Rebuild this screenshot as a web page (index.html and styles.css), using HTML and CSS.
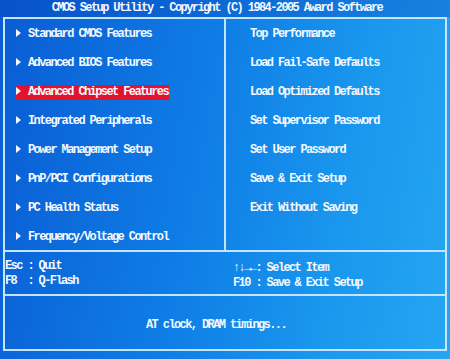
FILE: index.html
```html
<!DOCTYPE html>
<html lang="en">
<head>
    <meta charset="UTF-8">
    <meta name="viewport" content="width=device-width, initial-scale=1.0">
    <link rel="stylesheet" href="styles.css">
</head>
<body>
    <div class="title">CMOS Setup Utility - Copyright (C) 1984-2005 Award Software</div>

    <div class="screen">
        <div class="main">
            <ul class="menu menu-left">
                <li class="item"><span class="label"><span class="arrow"></span>Standard CMOS Features</span></li>
                <li class="item"><span class="label"><span class="arrow"></span>Advanced BIOS Features</span></li>
                <li class="item"><span class="label selected"><span class="arrow"></span>Advanced Chipset Features</span></li>
                <li class="item"><span class="label"><span class="arrow"></span>Integrated Peripherals</span></li>
                <li class="item"><span class="label"><span class="arrow"></span>Power Management Setup</span></li>
                <li class="item"><span class="label"><span class="arrow"></span>PnP/PCI Configurations</span></li>
                <li class="item"><span class="label"><span class="arrow"></span>PC Health Status</span></li>
                <li class="item"><span class="label"><span class="arrow"></span>Frequency/Voltage Control</span></li>
            </ul>
            <ul class="menu menu-right">
                <li class="item">Top Performance</li>
                <li class="item">Load Fail-Safe Defaults</li>
                <li class="item">Load Optimized Defaults</li>
                <li class="item">Set Supervisor Password</li>
                <li class="item">Set User Password</li>
                <li class="item">Save &amp; Exit Setup</li>
                <li class="item">Exit Without Saving</li>
            </ul>
        </div>

        <div class="keys">
            <div class="keys-left">
                <div class="key">Esc : Quit</div>
                <div class="key">F8  : Q-Flash</div>
            </div>
            <div class="keys-right">
                <div class="key">&uarr;&darr;&rarr;&larr;: Select Item</div>
                <div class="key">F10 : Save &amp; Exit Setup</div>
            </div>
        </div>

        <div class="help">AT clock, DRAM timings...</div>
    </div>
</body>
</html>
```

FILE: styles.css
```css
* {
    box-sizing: border-box;
}
html, body {
    width: 450px;
    height: 359px;
}
body {
    margin: 0;
    overflow: hidden;
    font-family: "Liberation Mono", "DejaVu Sans Mono", monospace;
    font-weight: bold;
    font-size: 12px;
    letter-spacing: -1.6px;
    color: #f4f9ff;
    background: linear-gradient(100deg, #0a5cd4 0%, #0f7ee6 45%, #1a98ee 75%, #25a6f2 100%);
}
.title {
    height: 17px;
    line-height: 16px;
    text-align: center;
    padding-right: 16px;
    background: rgba(8, 60, 180, 0.3);
}
.screen {
    margin: 0 3px;
    border: 2px solid #c4e4ff;
    height: 334px;
}
/* Main menu area */
.main {
    display: grid;
    grid-template-columns: 221px 1fr;
    height: 233px;
    border-bottom: 2px solid #c4e4ff;
}
.menu {
    list-style: none;
    margin: 0;
    padding: 1px 0 0 0;
}
.menu-left {
    border-right: 2px solid #c4e4ff;
    padding-left: 10px;
}
.menu-right {
    padding-left: 24px;
}
.item {
    height: 29px;
    line-height: 29px;
    white-space: pre;
}
.label {
    display: inline-block;
    line-height: 15px;
    padding: 0 1px;
}
.selected {
    background-color: #e2142c;
}
.arrow {
    display: inline-block;
    width: 0;
    height: 0;
    border-top: 4px solid transparent;
    border-bottom: 4px solid transparent;
    border-left: 5px solid #f4f9ff;
    margin-right: 7px;
    vertical-align: 0;
}
/* Key legend */
.keys {
    display: grid;
    grid-template-columns: 223px 1fr;
    height: 44px;
    padding-top: 7px;
    border-bottom: 2px solid #c4e4ff;
}
.keys-right {
    padding-left: 5px;
    padding-top: 2px;
}
.key {
    white-space: pre;
    line-height: 15px;
}
/* Help line */
.help {
    height: 52px;
    line-height: 52px;
    padding-top: 3px;
    text-align: center;
    padding-right: 18px;
}
```
